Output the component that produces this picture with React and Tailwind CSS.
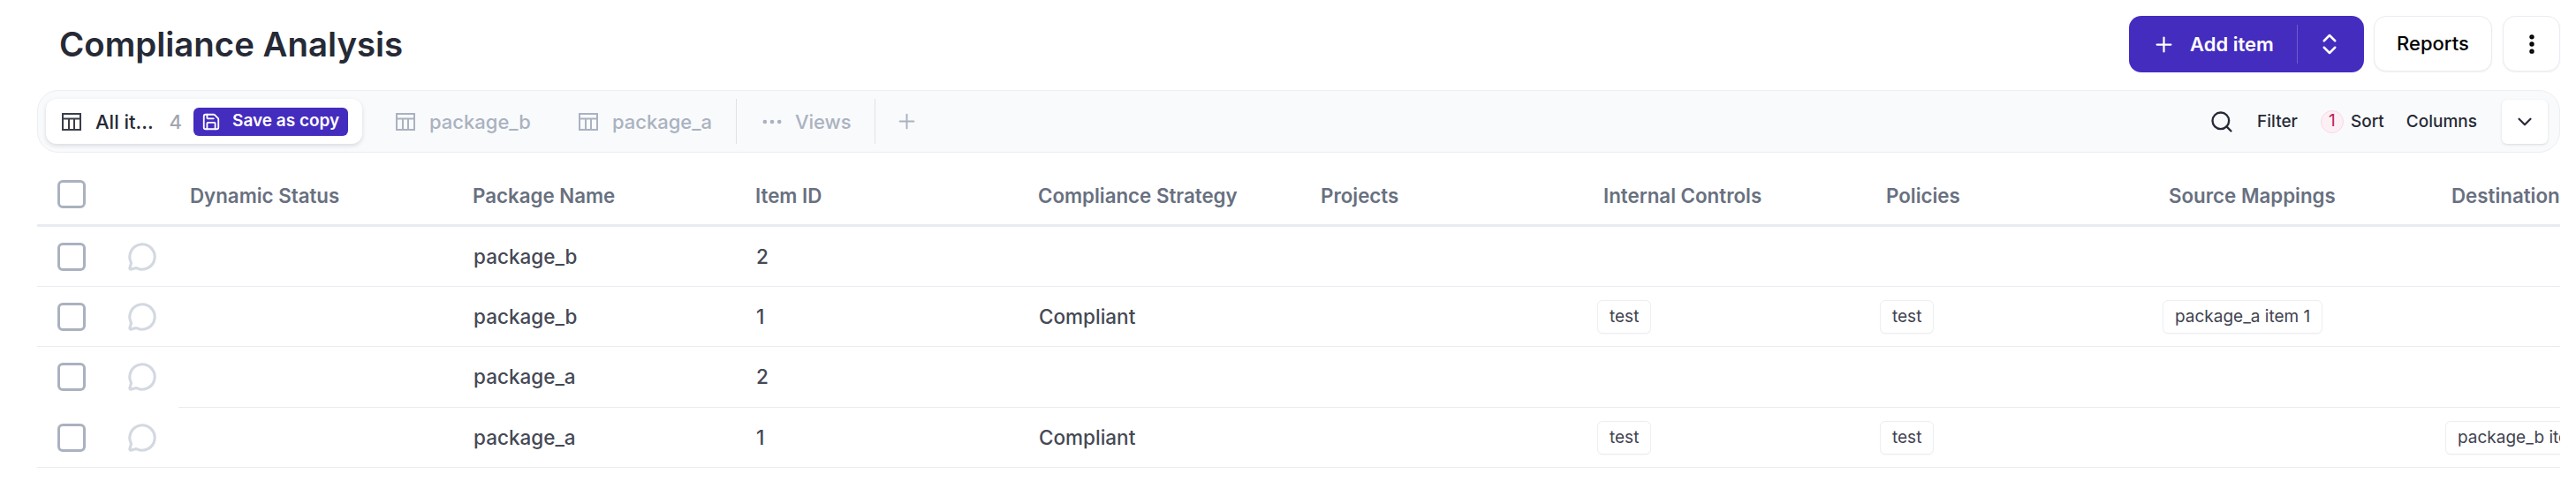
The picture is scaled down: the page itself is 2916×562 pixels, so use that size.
import React from 'react';
import { Plus, ChevronsUpDown, EllipsisVertical, Save, Ellipsis, Search, ChevronDown, MessageCircle } from 'lucide-react';

const columns = ['Dynamic Status', 'Package Name', 'Item ID', 'Compliance Strategy', 'Projects', 'Internal Controls', 'Policies', 'Source Mappings', 'Destination Mappings'];

const rows = [
    { pkg: 'package_b', id: '2', height: 'h-[68px]', left: 'border-b border-[#e8ebf0]' },
    { pkg: 'package_b', id: '1', strategy: 'Compliant', controls: 'test', policies: 'test', source: 'package_a item 1', height: 'h-[68px]', left: 'border-b border-[#e8ebf0]' },
    { pkg: 'package_a', id: '2', height: 'h-[69px]', left: 'border-b border-transparent' },
    { pkg: 'package_a', id: '1', strategy: 'Compliant', controls: 'test', policies: 'test', destination: 'package_b item 1', height: 'h-[68px]', left: 'h-[67px] self-start border-b border-[#e8ebf0]' },
];

function TableIcon({ className }) {
    return (
        <svg viewBox="0 0 22 20" fill="none" stroke="currentColor" strokeWidth="2" className={className}>
            <rect x="1" y="1" width="20" height="18" />
            <path d="M1 6.5h20M8 6.5V19M14 6.5V19" />
        </svg>
    );
}

function Checkbox() {
    return <div className="w-8 h-8 shrink-0 rounded-[6px] border-[3px] border-[#aab2c0] bg-white" />;
}

function Chip({ children }) {
    return (
        <span className="inline-flex items-center h-[38px] -ml-[8px] pt-[1px] px-[13px] rounded-[6px] border border-[#eceef2] bg-white text-[19px] font-normal text-[#3f4350] whitespace-nowrap shadow-[0_1px_1px_rgba(16,24,40,0.03)]">
            {children}
        </span>
    );
}

function Cell({ children, width = 'w-[320px]' }) {
    return <div className={`${width} shrink-0 flex items-center text-[22.5px] font-[450] text-[#454955] whitespace-nowrap`}>{children}</div>;
}

function ViewTab({ label }) {
    return (
        <div className="flex items-center gap-4 text-[22px] font-medium text-[#aab2c0]">
            <TableIcon className="w-[22px] h-5" />
            <span>{label}</span>
        </div>
    );
}

export default function App() {
    return (
        <div className="w-[2916px] h-[562px] overflow-hidden bg-white pl-[42px] pr-[18px] font-['Inter',sans-serif]">
            {/* Cabecalho */}
            <div className="h-[102px] pt-[18px] pl-[25px] flex items-start justify-between">
                <h1 className="mt-[8px] text-[38.4px] leading-[48px] font-semibold text-[#262a36]">Compliance Analysis</h1>
                <div className="flex items-start">
                    <div className="w-[266px] h-16 rounded-[14px] bg-[#442cbf] text-white flex items-center">
                        <div className="w-[190px] pl-[26px] flex items-center gap-[16px] text-[22px] font-semibold">
                            <Plus className="w-[27px] h-[27px]" strokeWidth={2} />
                            <span>Add item</span>
                        </div>
                        <div className="h-11 border-l border-[#6f5bd0]" />
                        <div className="flex-1 flex justify-center -ml-[4px]"><ChevronsUpDown className="w-[30px] h-[30px]" strokeWidth={2} /></div>
                    </div>
                    <button className="ml-[11px] w-[134px] h-[63px] rounded-[14px] bg-white border border-[#e9ecf1] shadow-[0_1px_2px_rgba(16,24,40,0.06)] text-[22px] font-medium text-black">Reports</button>
                    <button className="ml-3 w-[65px] h-[63px] rounded-[14px] bg-white border border-[#e9ecf1] shadow-[0_1px_2px_rgba(16,24,40,0.06)] flex items-center justify-center">
                        <EllipsisVertical className="w-7 h-7 text-black" strokeWidth={2.6} />
                    </button>
                </div>
            </div>

            {/* Barra de visoes */}
            <div className="h-[71px] rounded-[24px] border border-[#eceef3] bg-[#f9fafc] pl-[9px] pr-[13px] flex items-center justify-between">
                <div className="flex items-center">
                    <div className="w-[358px] h-[51px] rounded-[12px] bg-white shadow-[0_2px_5px_rgba(16,24,40,0.14)] pl-[18px] flex items-center text-[22px] font-medium text-[#262a36]">
                        <TableIcon className="w-[22px] h-5 text-[#3a3e4a]" />
                        <span className="ml-4 pt-[2px]">All it...</span>
                        <span className="ml-[18px] pt-[2px] text-[#a2a6af]">4</span>
                        <div className="ml-[13px] w-[175px] h-8 rounded-[6px] bg-[#442cbf] pl-[9px] flex items-center gap-[13px] text-[19px] font-semibold text-white">
                            <Save className="w-[22px] h-[22px]" strokeWidth={2} />
                            <span className="whitespace-nowrap">Save as copy</span>
                        </div>
                    </div>
                    <div className="ml-[38px] pt-[1px] flex items-center gap-[54px]">
                        <ViewTab label="package_b" />
                        <ViewTab label="package_a" />
                    </div>
                    <div className="ml-[27px] h-[51px] border-l border-[#dfe2e8]" />
                    <div className="ml-[26px] pt-[1px] flex items-center gap-[12px] text-[22px] font-medium text-[#aab2c0]">
                        <Ellipsis className="w-7 h-7" />
                        <span>Views</span>
                    </div>
                    <div className="ml-[26px] h-[51px] border-l border-[#dfe2e8]" />
                    <Plus className="ml-[22px] w-[27px] h-[27px] text-[#aab2c0]" strokeWidth={1.75} />
                </div>
                <div className="flex items-center text-[19px] font-medium text-[#262a36]">
                    <Search className="w-7 h-7" strokeWidth={2} />
                    <span className="ml-[26px] pt-[2px]">Filter</span>
                    <span className="ml-[26px] w-[26px] h-[26px] rounded-full bg-[#fdf0f5] border border-[#f8d9e5] text-[#b9225c] flex items-center justify-center text-[19px] font-normal">1</span>
                    <span className="ml-2 pt-[2px]">Sort</span>
                    <span className="ml-[25px] pt-[2px]">Columns</span>
                    <div className="ml-[28px] w-[52px] h-[50px] rounded-[6px] bg-white shadow-[0_1px_3px_rgba(16,24,40,0.14)] flex items-center justify-center">
                        <ChevronDown className="w-[26px] h-[26px]" strokeWidth={2} />
                    </div>
                </div>
            </div>

            {/* Tabela */}
            <div className="overflow-hidden">
                <div className="h-[84px] pt-[13px] flex border-b-[3px] border-[#e8ebf2]">
                    <div className="w-[173px] shrink-0 pl-[23px] flex items-center"><Checkbox /></div>
                    {columns.map((col) => (
                        <div key={col} className="w-[320px] shrink-0 pt-[3px] flex items-center text-[22.3px] font-semibold text-[#687080] whitespace-nowrap">{col}</div>
                    ))}
                </div>
                {rows.map((row, i) => (
                    <div key={i} className={`${row.height} flex`}>
                        <div className={`w-[160px] h-full shrink-0 pl-[23px] flex items-center gap-[47px] ${row.left}`}>
                            <Checkbox />
                            <MessageCircle className="w-[34px] h-[34px] text-[#d3d8e1]" strokeWidth={2.2} />
                        </div>
                        <div className="flex-1 flex border-b border-[#e8ebf0]">
                            <Cell width="w-[334px]" />
                            <Cell>{row.pkg}</Cell>
                            <Cell>{row.id}</Cell>
                            <Cell>{row.strategy}</Cell>
                            <Cell />
                            <Cell>{row.controls && <Chip>{row.controls}</Chip>}</Cell>
                            <Cell>{row.policies && <Chip>{row.policies}</Chip>}</Cell>
                            <Cell>{row.source && <Chip>{row.source}</Chip>}</Cell>
                            <Cell>{row.destination && <Chip>{row.destination}</Chip>}</Cell>
                        </div>
                    </div>
                ))}
            </div>
        </div>
    );
}
